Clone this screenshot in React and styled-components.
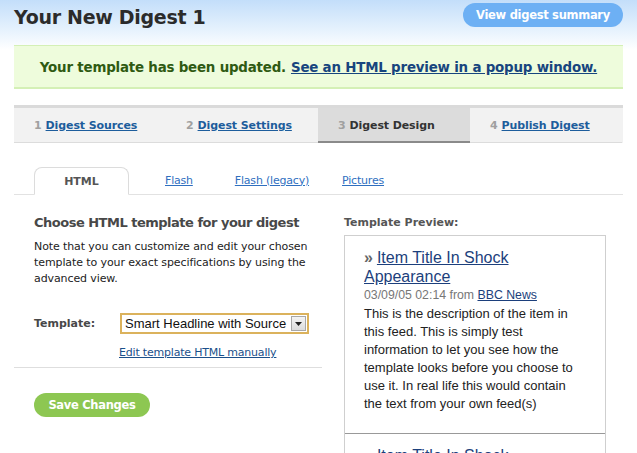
import React from "react";
import styled, { createGlobalStyle } from "styled-components";

const Global = createGlobalStyle`
  html, body { margin: 0; padding: 0; background: #fff; }
  body { font-family: "DejaVu Sans", Verdana, sans-serif; color: #222; }
  a { color: #1b4f8a; }
`;

const Page = styled.div`
  width: 637px;
  height: 453px;
  overflow: hidden;
  background: linear-gradient(#c3defa 0px, #e6f2fd 30px, #ffffff 50px, #ffffff 100%);
`;

const Header = styled.div`
  display: flex;
  align-items: flex-start;
  justify-content: space-between;
  padding: 3px 14px 0 14px;
  height: 45px;
  box-sizing: border-box;
`;

const Title = styled.h1`
  margin: 3px 0 0 0;
  font-size: 19px;
  font-weight: bold;
  color: #2b2b2b;
  letter-spacing: -0.3px;
`;

const PillButton = styled.a`
  display: inline-flex;
  align-items: center;
  justify-content: center;
  height: 24px;
  padding: 0 10px;
  border-radius: 12px;
  background: ${(p) => p.$bg};
  color: #fff;
  font-size: 11.5px;
  font-weight: bold;
  text-decoration: none;
  letter-spacing: -0.3px;
  width: ${(p) => p.$w}px;
  box-sizing: border-box;
`;

const Notice = styled.div`
  margin: 0 14px;
  height: 44px;
  box-sizing: border-box;
  background: #eefcdc;
  border-top: 1px solid #d4f0b6;
  border-bottom: 2px solid #d4f0b6;
  display: flex;
  align-items: center;
  justify-content: center;
  padding-top: 2px;
  font-size: 13.4px;
  font-weight: bold;
  color: #2f5a12;
  letter-spacing: -0.2px;
  a { color: #17457e; margin-left: 5px; }
`;

const Steps = styled.div`
  margin: 16px 14px 0 14px;
  display: grid;
  grid-template-columns: repeat(4, 152px);
  border-top: 3px solid #dadada;
  background: #f2f2f2;
`;

const Step = styled.div`
  height: 35px;
  box-sizing: border-box;
  padding-left: 20px;
  padding-top: 1px;
  display: flex;
  align-items: center;
  font-size: 11px;
  font-weight: bold;
  letter-spacing: -0.1px;
  color: #333;
  background: ${(p) => (p.$active ? "#dcdcdc" : "#f2f2f2")};
  border-bottom: ${(p) => (p.$active ? "2px solid #8a8a8a" : "1px solid #dcdcdc")};
  margin-bottom: ${(p) => (p.$active ? "-1px" : "0")};
  a { color: #1d5d9c; }
`;

const StepNum = styled.span`
  color: #a0a0a0;
  margin-right: 4px;
`;

const SubTabs = styled.div`
  margin: 24px 14px 0 14px;
  display: flex;
  align-items: flex-end;
  border-bottom: 1px solid #e2e2e2;
  padding-left: 20px;
  height: 27px;
`;

const SubTab = styled.div`
  height: 27px;
  box-sizing: border-box;
  display: flex;
  align-items: center;
  justify-content: center;
  font-size: 11px;
  ${(p) =>
    p.$active
      ? `
    width: 95px;
    border: 1px solid #dcdcdc;
    border-bottom: 1px solid #fff;
    margin-bottom: -1px;
    height: 28px;
    border-radius: 8px 8px 0 0;
    background: #fff;
    font-weight: bold;
    color: #555;
  `
      : `
    margin-left: ${p.$ml}px;
    padding-bottom: 1px;
    a { color: #2f6fbf; letter-spacing: -0.2px; }
  `}
`;

const Body = styled.div`
  display: grid;
  grid-template-columns: 308px 281px;
  column-gap: 22px;
  margin: 0 14px;
`;

const Left = styled.div`
  display: flex;
  flex-direction: column;
`;

const LeftInner = styled.div`
  padding: 20px 12px 8px 20px;
  border-bottom: 1px solid #dedede;
`;

const H2 = styled.h2`
  margin: 0;
  font-size: 13px;
  font-weight: bold;
  color: #484848;
  letter-spacing: -0.5px;
`;

const Note = styled.p`
  margin: 9px 0 0 0;
  font-size: 11px;
  line-height: 16px;
  color: #222;
  letter-spacing: -0.1px;
`;

const FormRow = styled.div`
  display: flex;
  align-items: center;
  margin-top: 26px;
`;

const Label = styled.label`
  width: 86px;
  font-size: 11px;
  font-weight: bold;
  color: #484848;
`;

const Select = styled.div`
  width: 189px;
  height: 21px;
  box-sizing: border-box;
  border: 2px solid #dbb25c;
  display: flex;
  align-items: center;
  justify-content: space-between;
  padding-left: 3px;
  background: #fff;
  font-family: "Liberation Sans", Arial, sans-serif;
  font-size: 13px;
  color: #111;
`;

const SelectArrow = styled.span`
  width: 15px;
  height: 15px;
  margin-right: 1px;
  box-sizing: border-box;
  border: 1px solid #a8a8a8;
  background: linear-gradient(#f4f4f4, #dcdcdc);
  display: flex;
  align-items: center;
  justify-content: center;
`;

const EditLink = styled.a`
  display: block;
  margin: 12px 0 0 85px;
  font-size: 11px;
  color: #1b4f8a;
  letter-spacing: -0.2px;
`;

const ButtonRow = styled.div`
  padding: 25px 0 0 20px;
`;

const Right = styled.div`
  display: flex;
  flex-direction: column;
  padding-top: 21px;
`;

const PreviewLabel = styled.div`
  font-size: 11px;
  font-weight: bold;
  color: #555;
  margin-bottom: 6px;
`;

const PreviewBox = styled.div`
  width: 260px;
  border: 1px solid #cfcfcf;
  border-bottom: none;
  font-family: "Liberation Sans", Arial, sans-serif;
`;

const Item = styled.div`
  padding: 12px 20px 20px 19px;
  border-bottom: 1px solid #999;
`;

const ItemTitle = styled.div`
  font-size: 16px;
  line-height: 19px;
  a { color: #1c3f7c; }
`;

const Raquo = styled.span`
  color: #666;
  font-weight: bold;
  margin-right: 4px;
`;

const Meta = styled.div`
  font-size: 12.3px;
  line-height: 19px;
  color: #777;
  a { color: #1c3f7c; }
`;

const Desc = styled.div`
  font-size: 13px;
  line-height: 18px;
  color: #222;
`;

function ArrowDown() {
  return (
    <svg width="7" height="4" viewBox="0 0 7 4">
      <path d="M0 0 H7 L3.5 4 Z" fill="#222" />
    </svg>
  );
}

function PreviewItem() {
  return (
    <Item>
      <ItemTitle>
        <Raquo>»</Raquo>
        <a href="#">Item Title In Shock Appearance</a>
      </ItemTitle>
      <Meta>
        03/09/05 02:14 from <a href="#">BBC News</a>
      </Meta>
      <Desc>
        This is the description of the item in this feed. This is simply test
        information to let you see how the template looks before you choose to
        use it. In real life this would contain the text from your own feed(s)
      </Desc>
    </Item>
  );
}

export default function App() {
  return (
    <>
      <Global />
      <Page>
        <Header>
          <Title>Your New Digest 1</Title>
          <PillButton href="#" $bg="#6db0f4" $w={160}>
            View digest summary
          </PillButton>
        </Header>
        <Notice>
          Your template has been updated.
          <a href="#">See an HTML preview in a popup window.</a>
        </Notice>
        <Steps>
          <Step>
            <StepNum>1</StepNum>
            <a href="#">Digest Sources</a>
          </Step>
          <Step>
            <StepNum>2</StepNum>
            <a href="#">Digest Settings</a>
          </Step>
          <Step $active>
            <StepNum>3</StepNum>
            Digest Design
          </Step>
          <Step>
            <StepNum>4</StepNum>
            <a href="#">Publish Digest</a>
          </Step>
        </Steps>
        <SubTabs>
          <SubTab $active>HTML</SubTab>
          <SubTab $ml={36}>
            <a href="#">Flash</a>
          </SubTab>
          <SubTab $ml={42}>
            <a href="#">Flash (legacy)</a>
          </SubTab>
          <SubTab $ml={33}>
            <a href="#">Pictures</a>
          </SubTab>
        </SubTabs>
        <Body>
          <Left>
            <LeftInner>
              <H2>Choose HTML template for your digest</H2>
              <Note>
                Note that you can customize and edit your chosen template to
                your exact specifications by using the advanced view.
              </Note>
              <FormRow>
                <Label>Template:</Label>
                <Select>
                  Smart Headline with Source
                  <SelectArrow>
                    <ArrowDown />
                  </SelectArrow>
                </Select>
              </FormRow>
              <EditLink href="#">Edit template HTML manually</EditLink>
            </LeftInner>
            <ButtonRow>
              <PillButton href="#" $bg="#8dc752" $w={116}>
                Save Changes
              </PillButton>
            </ButtonRow>
          </Left>
          <Right>
            <PreviewLabel>Template Preview:</PreviewLabel>
            <PreviewBox>
              <PreviewItem />
              <PreviewItem />
            </PreviewBox>
          </Right>
        </Body>
      </Page>
    </>
  );
}
